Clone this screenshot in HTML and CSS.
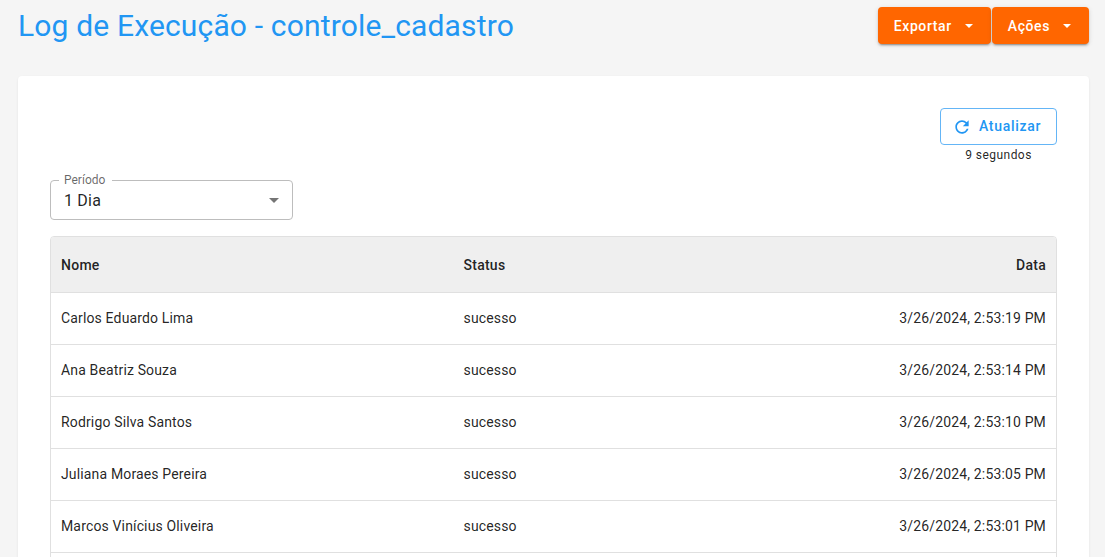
FILE: index.html
```html
<!DOCTYPE html>
<html lang="pt">
<head>
<meta charset="utf-8">
<title>Log de Execução</title>
<link rel="stylesheet" href="styles.css">
</head>
<body>
<div class="page">
  <header class="top">
    <h1 class="title">Log de Execução - controle_cadastro</h1>
    <div class="actions">
      <button class="btn-orange">Exportar<span class="caret"></span></button>
      <button class="btn-orange">Ações<span class="caret"></span></button>
    </div>
  </header>
  <main class="card">
    <div class="refresh">
      <button class="btn-outline">
        <svg class="ico" viewBox="0 0 24 24" width="20" height="20"><path fill="currentColor" d="M17.65 6.35C16.2 4.9 14.21 4 12 4c-4.42 0-7.99 3.58-7.99 8s3.57 8 7.99 8c3.73 0 6.84-2.55 7.73-6h-2.08c-.82 2.33-3.04 4-5.65 4-3.31 0-6-2.69-6-6s2.69-6 6-6c1.66 0 3.14.69 4.22 1.78L13 11h7V4l-2.35 2.35z"/></svg>
        <span class="btn-text">Atualizar</span>
      </button>
      <div class="since">9 segundos</div>
    </div>
    <div class="select">
      <span class="select-label">Período</span>
      <span class="select-value">1 Dia</span>
      <span class="select-caret"></span>
    </div>
    <div class="table-wrap">
      <table class="table">
        <thead>
          <tr><th>Nome</th><th>Status</th><th class="right">Data</th></tr>
        </thead>
        <tbody>
          <tr><td>Carlos Eduardo Lima</td><td>sucesso</td><td class="right">3/26/2024, 2:53:19 PM</td></tr>
          <tr><td>Ana Beatriz Souza</td><td>sucesso</td><td class="right">3/26/2024, 2:53:14 PM</td></tr>
          <tr><td>Rodrigo Silva Santos</td><td>sucesso</td><td class="right">3/26/2024, 2:53:10 PM</td></tr>
          <tr><td>Juliana Moraes Pereira</td><td>sucesso</td><td class="right">3/26/2024, 2:53:05 PM</td></tr>
          <tr><td>Marcos Vinícius Oliveira</td><td>sucesso</td><td class="right">3/26/2024, 2:53:01 PM</td></tr>
          <tr><td></td><td></td><td></td></tr>
        </tbody>
      </table>
    </div>
  </main>
</div>
</body>
</html>
```
FILE: styles.css
```css
* { box-sizing: border-box; }
html, body { margin: 0; height: 100%; overflow: hidden; }
body { background: #f5f5f5; font-family: Roboto, "Liberation Sans", sans-serif; color: rgba(0,0,0,.87); }
.page { padding: 0 16px 0 18px; }
.top { display: flex; justify-content: space-between; align-items: flex-start; height: 76px; }
.title { margin: 6px 0 0; font-size: 30px; font-weight: 400; line-height: 40px; letter-spacing: .16px; color: #2196f3; }
.actions { display: flex; gap: 1px; padding-top: 7px; }
.btn-orange { height: 37px; border: 0; border-radius: 4px; background: #ff6600; color: #fff; font: 500 14px/1 Roboto, sans-serif; letter-spacing: .6px; padding: 0 16px; display: flex; align-items: center; box-shadow: 0 3px 1px -2px rgba(0,0,0,.2), 0 2px 2px rgba(0,0,0,.14), 0 1px 5px rgba(0,0,0,.12); }
.caret { width: 0; height: 0; margin: 1px 2px 0 13px; border-left: 4.5px solid transparent; border-right: 4.5px solid transparent; border-top: 4.5px solid #fff; }
.card { background: #fff; border-radius: 4px; height: 520px; padding: 32px 32px 0; box-shadow: 0 2px 1px -1px rgba(0,0,0,.06), 0 1px 1px rgba(0,0,0,.05), 0 1px 3px rgba(0,0,0,.06); }
.refresh { display: flex; flex-direction: column; align-items: flex-end; }
.btn-outline { width: 117px; height: 37px; background: #fff; border: 1px solid #64b5f6; border-radius: 4px; color: #2196f3; font: 500 14px/1 Roboto, sans-serif; letter-spacing: .7px; display: flex; align-items: center; justify-content: flex-start; gap: 7px; padding: 0 0 1px 11px; }
.ico { display: block; margin-top: 1px; }
.since { width: 117px; text-align: center; font-size: 12px; line-height: 20px; letter-spacing: .45px; }
.select { position: relative; width: 243px; height: 40px; margin-top: 15px; border: 1px solid #bdbdbd; border-radius: 4px; display: flex; align-items: center; padding-left: 13px; font-size: 16px; letter-spacing: .2px; }
.select-label { position: absolute; left: 8px; top: -8px; background: #fff; padding: 0 7px 0 5px; font-size: 12px; line-height: 14px; letter-spacing: 0; color: rgba(0,0,0,.6); }
.select-caret { position: absolute; right: 13px; top: 17px; border-left: 5px solid transparent; border-right: 5px solid transparent; border-top: 5px solid rgba(0,0,0,.54); }
.table-wrap { margin-top: 16px; border: 1px solid #e0e0e0; border-radius: 4px; overflow: hidden; }
.table { width: 100%; border-collapse: collapse; font-size: 14px; letter-spacing: .15px; table-layout: fixed; }
.table th { height: 55px; padding: 2px 10px 0; background: #efefef; text-align: left; font-weight: 500; letter-spacing: .25px; border-bottom: 1px solid #e0e0e0; }
.table td { height: 52px; padding: 0 10px; border-bottom: 1px solid #e0e0e0; }
.table th:first-child { width: 402.5px; }
.table .right { text-align: right; }
```
